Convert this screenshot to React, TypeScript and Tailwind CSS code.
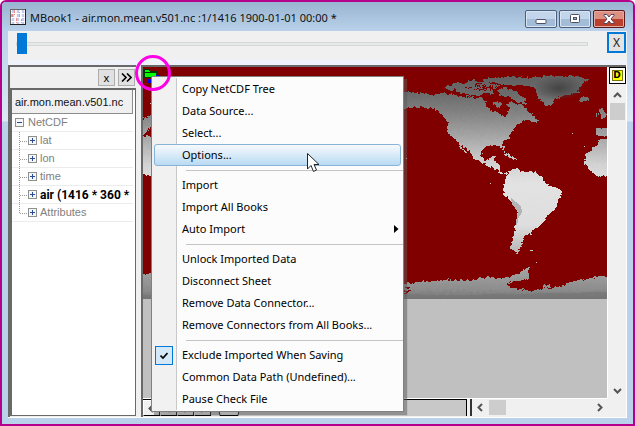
import React, { useState } from "react";
import clsx from "clsx";

type MenuEntry = {
  label?: string;
  separator?: boolean;
  submenu?: boolean;
  checkable?: boolean;
};

const menuEntries: MenuEntry[] = [
  { label: "Copy NetCDF Tree" },
  { label: "Data Source..." },
  { label: "Select..." },
  { label: "Options..." },
  { separator: true },
  { label: "Import" },
  { label: "Import All Books" },
  { label: "Auto Import", submenu: true },
  { separator: true },
  { label: "Unlock Imported Data" },
  { label: "Disconnect Sheet" },
  { label: "Remove Data Connector..." },
  { label: "Remove Connectors from All Books..." },
  { separator: true },
  { label: "Exclude Imported When Saving", checkable: true },
  { label: "Common Data Path (Undefined)..." },
  { label: "Pause Check File" },
];

const treeItems = ["lat", "lon", "time", "air (1416 * 360 *", "Attributes"];

const BookIcon = () => (
  <svg width="16" height="16" viewBox="0 0 16 16" shapeRendering="crispEdges">
    <rect width="16" height="16" fill="#f8f0f4" />
    <path d="M2 1h2v14h-2zM7 1h2v14h-2zM12 1h2v14h-2z" fill="#a9b9ee" opacity=".7" />
    <path d="M4 1h2v5h-2zM9 3h2v5h-2zM5 8h2v6h-2zM10 10h2v4h-2zM1 5h2v3h-2z" fill="#f07070" opacity=".75" />
    <path d="M1 4.500h14M1 8.500h14M1 12.500h14M5.500 1v14M10.500 1v14" stroke="#fff" />
    <path d="M.5 0V16M0 .5H16" stroke="#666" />
    <path d="M0 15.500h16M15.500 0v16" stroke="#222" />
  </svg>
);

const Chevron = ({ dir }: { dir: "up" | "down" | "left" | "right" }) => {
  const paths = {
    up: "M1 6L4.500 2.500L8 6",
    down: "M1 3L4.500 6.500L8 3",
    left: "M6 1L2.500 4.500L6 8",
    right: "M3 1L6.500 4.500L3 8",
  };
  return (
    <svg width="9" height="9" viewBox="0 0 9 9" fill="none" stroke="#555" strokeWidth="2">
      <path d={paths[dir]} />
    </svg>
  );
};

const Expander = ({ open }: { open?: boolean }) => (
  <svg className="shrink-0" width="9" height="9" viewBox="0 0 9 9" shapeRendering="crispEdges">
    <rect x=".5" y=".5" width="8" height="8" fill="#f6f6f6" stroke="#8e8f8f" />
    <path d={open ? "M2 4.500h5" : "M2 4.500h5M4.500 2v5"} stroke="#2b4a9b" />
  </svg>
);

const TitleBar = () => (
  <header className="flex h-[29px] shrink-0 items-center bg-linear-to-b from-[#99b4d1] to-[#b9d1ea] pr-2 pl-2">
    <BookIcon />
    <h1 className="min-w-0 flex-1 truncate pt-1 pl-1 font-['Noto_Sans','Open_Sans',sans-serif] text-[11px] text-[#111]">
      MBook1 - air.mon.mean.v501.nc :1/1416 1900-01-01 00:00 *
    </h1>
    <div className="flex gap-0.5 pt-[5px]">
      <button
        aria-label="Minimize"
        className="flex h-[18px] w-8 items-center justify-center rounded-xs border border-[#4d5f7d] bg-linear-to-b from-[#c2d5ea] from-50% to-[#a3bcd8] to-50% shadow-[inset_0_0_0_1px_#d8e5f2]"
      >
        <svg width="12" height="12" viewBox="0 0 12 12">
          <rect x="1" y="6.500" width="10" height="4" rx="1" fill="#fff" stroke="#4a5262" />
        </svg>
      </button>
      <button
        aria-label="Maximize"
        className="flex h-[18px] w-8 items-center justify-center rounded-xs border border-[#4d5f7d] bg-linear-to-b from-[#c2d5ea] from-50% to-[#a3bcd8] to-50% shadow-[inset_0_0_0_1px_#d8e5f2]"
      >
        <svg width="12" height="10" viewBox="0 0 12 10">
          <rect x="1.500" y=".5" width="9" height="8" rx="1" fill="#fff" stroke="#4a5262" />
          <rect x="4.500" y="3.500" width="3" height="2" fill="#9bb4d4" stroke="#4a5262" />
        </svg>
      </button>
      <button
        aria-label="Close"
        className="flex h-[18px] w-8 items-center justify-center rounded-xs border border-[#5c1a1a] bg-linear-to-b from-[#dd9082] from-50% to-[#b8402c] to-50% shadow-[inset_0_0_0_1px_#e5aaa0]"
      >
        <svg width="12" height="10" viewBox="0 0 12 10">
          <path d="M1 .5H4L6 3L8 .5H11V1.500L8 5L11 8.500V9.500H8L6 7L4 9.500H1V8.500L4 5L1 1.500Z" fill="#fff" stroke="#55435a" />
        </svg>
      </button>
    </div>
  </header>
);

const SliderBar = () => {
  const [frame, setFrame] = useState(1);
  return (
    <div className="flex h-[34px] shrink-0 items-start justify-between border-b-[5px] border-[#f0f2fb] bg-[#f0f0f0] pt-px pr-px pl-2">
      <input
        type="range"
        aria-label="Frame"
        min={1}
        max={1416}
        value={frame}
        onChange={(e) => setFrame(Number(e.target.value))}
        className="mt-px mr-[19px] h-[22px] min-w-0 flex-1 appearance-none bg-transparent [&::-webkit-slider-runnable-track]:h-1 [&::-webkit-slider-runnable-track]:border [&::-webkit-slider-runnable-track]:border-[#d6d6d6] [&::-webkit-slider-runnable-track]:bg-[#e7eaea] [&::-webkit-slider-thumb]:-mt-2.5 [&::-webkit-slider-thumb]:h-[21px] [&::-webkit-slider-thumb]:w-2.5 [&::-webkit-slider-thumb]:appearance-none [&::-webkit-slider-thumb]:bg-[#0078d7]"
      />
      <button className="h-[21px] w-[19px] border-2 border-[#0078d7] bg-[#e3e3e3] font-['Noto_Sans',sans-serif] text-[12px] leading-[17px] text-[#222]">
        X
      </button>
    </div>
  );
};

const TreePanel = () => (
  <aside className="flex w-[128px] shrink-0 flex-col border-t-2 border-l-2 border-[#696969] bg-[#f0f0f0]">
    <div className="flex h-[21px] shrink-0 items-center justify-end gap-[3px] pr-px">
      <button className="h-[17px] w-[17px] border border-[#adadad] bg-[#e1e1e1] font-['Noto_Sans',sans-serif] text-[11px] leading-[14px]">
        x
      </button>
      <button
        aria-label="Expand"
        className="flex h-[17px] w-[17px] items-center justify-center border border-[#adadad] bg-[#e1e1e1]"
      >
        <svg width="11" height="9" viewBox="0 0 11 9" fill="none" stroke="#000" strokeWidth="1.600">
          <path d="M1 .5L5 4.500L1 8.500M6 .5L10 4.500L6 8.500" />
        </svg>
      </button>
    </div>
    <div className="mb-px flex min-h-0 flex-1 flex-col border-2 border-r-[1px] border-b-[1px] border-[#696969] bg-white pr-0.5">
      <div className="h-6 shrink-0 border-r border-b border-[#8c8c8c] bg-[#f0f0f0] pl-[3px] font-['Liberation_Sans',sans-serif] text-[11px] leading-6 whitespace-nowrap text-[#111]">
        air.mon.mean.v501.nc
      </div>
      <ul className="font-['Liberation_Sans',sans-serif] text-[11px] text-[#808080]">
        <li className="flex h-[18px] items-center gap-1 border-b border-[#ececec] pl-[3px]">
          <Expander open />
          NetCDF
        </li>
        {treeItems.map((item, i) => (
          <li key={item} className="flex h-[18px] items-center border-b border-[#ececec] pl-[7px] whitespace-nowrap">
            <svg className="shrink-0" width="9" height="18" viewBox="0 0 9 18" stroke="#999" strokeDasharray="1 1" shapeRendering="crispEdges">
              <path d={i === treeItems.length - 1 ? "M.5 0V9" : "M.5 0V18"} />
              <path d="M1 9.500H9" />
            </svg>
            <Expander />
            <span
              className={clsx(
                "pl-[3px]",
                item.startsWith("air") && "font-['Roboto','Liberation_Sans',sans-serif] text-[12px] font-bold text-black"
              )}
            >
              {item}
            </span>
          </li>
        ))}
      </ul>
    </div>
  </aside>
);

// Grey scale of mean air temperature, land only
const WorldMap = () => (
  <svg className="block w-full" viewBox="143 67 464 232" shapeRendering="crispEdges">
    <defs>
      <linearGradient id="temp" gradientUnits="userSpaceOnUse" x1="0" y1="67" x2="0" y2="299">
        <stop offset="0" stopColor="#5c5c5c" />
        <stop offset=".12" stopColor="#6c6c6c" />
        <stop offset=".2" stopColor="#838383" />
        <stop offset=".32" stopColor="#adadad" />
        <stop offset=".42" stopColor="#d2d2d2" />
        <stop offset=".5" stopColor="#e2e2e2" />
        <stop offset=".68" stopColor="#dedede" />
        <stop offset=".8" stopColor="#b8b8b8" />
        <stop offset=".9" stopColor="#9c9c9c" />
        <stop offset=".96" stopColor="#8c8c8c" />
        <stop offset="1" stopColor="#747474" />
      </linearGradient>
      <radialGradient id="ice">
        <stop offset="0" stopColor="#444" />
        <stop offset="1" stopColor="#444" stopOpacity="0" />
      </radialGradient>
      <filter id="coast" filterUnits="userSpaceOnUse" x="143" y="67" width="464" height="232" colorInterpolationFilters="sRGB">
        <feTurbulence type="fractalNoise" baseFrequency=".3" numOctaves="2" seed="4" result="n" />
        <feDisplacementMap in="SourceGraphic" in2="n" scale="5" xChannelSelector="R" yChannelSelector="G" />
      </filter>
    </defs>
    <rect x="143" y="67" width="464" height="232" fill="#800000" />
    <g fill="url(#temp)" filter="url(#coast)">
      {/* eastern Asia */}
      <path d="M140 122L146 117L152 115V127L147 131L143 134V136H152V175H140Z" />
      {/* North America */}
      <path d="M395 91L410 92L420 93L432 95L443 93L452 94L460 96L472 96L480 98L487 101L485 105L490 110L497 112L502 115L505 118L508 113L510 108L507 104L511 101L516 105L521 104L526 108L529 113L534 116L532 120L524 120L519 124L515 127L511 133L508 139L502 143L504 148L505 153L502 149L499 145L492 145L486 146L482 150L481 156L484 160L489 160L492 156L496 156L495 162L500 165L500 171L504 173L508 172L507 175L501 174L495 169L486 165L480 161L473 159L471 153L465 148L458 142L450 135L447 128L448 121L443 117L438 111L431 108L420 107L411 107L404 110L395 111Z" />
      <path d="M458 143L461 145L464 150L467 153L465 153L461 149Z" />
      {/* Arctic islands */}
      <path d="M446 87L458 82L463 84L470 82L475 86L484 88L492 90L495 94L484 93L478 96L469 95L461 93L455 90L449 91Z" />
      <path d="M467 82L473 80L479 82L488 83L500 85L497 88L484 87L473 85Z" />
      <path d="M481 80L490 78L505 77L529 77L519 82L507 85L500 84L493 82L485 83Z" />
      <path d="M497 90L504 88L510 89L516 92L521 96L527 99L524 101L527 105L520 103L514 100L508 97L500 96Z" />
      <path d="M493 103L498 101L502 104L500 107L495 106Z" />
      <path d="M527 118L531 114L535 118L539 121L536 123L530 121Z" />
      {/* Greenland and Iceland */}
      <path d="M504 84L515 79L533 77L553 76L577 76L585 79L591 78L584 82L582 86L578 89L580 93L573 93L567 95L560 97L555 100L553 104L548 106L543 103L539 99L537 93L535 88L528 86L517 85Z" />
      <path d="M578 98L584 97L589 99L587 101L581 101Z" />
      {/* Caribbean */}
      <path d="M502 155L508 154L514 157L519 159L514 160L508 157Z" />
      {/* Europe and Africa */}
      <path d="M599 109L603 107L604 112L607 117L602 119L600 114ZM595 113L599 113L598 117L595 117ZM596 128L610 127V136L596 136Z" />
      <path d="M612 138L600 139L597 145L590 150L586 155L585 163L589 170L597 176L612 177Z" />
      {/* South America */}
      <path d="M508 173L513 169L517 168L521 171L529 171L537 173L542 177L544 181L550 186L558 188L562 192L558 201L556 209L547 216L544 221L539 227L533 230L532 233L525 236L523 241L521 246L518 253L514 252L511 249L511 243L514 236L515 227L517 217L517 208L512 202L506 197L503 190L505 180Z" />
      {/* Antarctica */}
      <path d="M140 275L175 272L240 279L310 276L370 280L404 284L412 283L423 281L450 280L476 280L480 277L507 278L515 275L521 272L526 271L529 275L529 279L517 281L507 283L508 286L520 289L533 291L547 288L560 287L570 282L587 279L600 276L610 277V305H140Z" />
      <path d="M530 267L524 269L519 273L524 274L529 270ZM543 286L551 285L551 287L543 288Z" />
    </g>
    {/* channels between the islands */}
    <path
      d="M449 93L466 97L484 98L497 101M466 87L480 90L494 88M476 84L488 86L503 87M482 97L488 94L498 98L508 101M400 287H411M402 291H413M400 294H407"
      fill="none"
      stroke="#800000"
      filter="url(#coast)"
    />
    <ellipse cx="559" cy="88" rx="25" ry="12" fill="url(#ice)" />
    <path d="M511 198L516 202L521 206L522 212L518 219L517 227L516 222L518 212L512 204Z" fill="#b4b4b4" />
    <path d="M142 295L300 293L460 295L607 292V299H142Z" fill="#757575" opacity=".6" />
    <path d="M406 158h1v1h-1zM572 133h1v1h-1zM584 146h1v1h-1zM490 183h1v1h-1zM150 103h1v1h-1zM530 250h3v1h-3zM536 262h1v1h-1z" fill="#ccc" />
  </svg>
);

const SheetTabs = () => (
  <div className="flex h-[17px] min-w-0 flex-1 items-start border-t border-r border-black bg-[#c8c8c8]">
    {(["left", "left", "right", "right"] as const).map((dir, i) => (
      <button
        key={i}
        aria-label={`Sheet ${dir}`}
        className="flex h-4 w-[17px] items-center justify-center border border-t-white border-r-black border-b-black border-l-white bg-[#f0f0f0]"
      >
        <Chevron dir={dir} />
      </button>
    ))}
    <svg className="ml-1.5" width="24" height="16" viewBox="0 0 24 16">
      <path d="M0 0L3 15.500H21L24 0Z" fill="#fff" stroke="#000" />
    </svg>
  </div>
);

const Sheet = () => (
  <main className="flex min-w-0 flex-1 flex-col border-t-2 border-l-2 border-[#696969] bg-[#f0f0f0]">
    <div className="flex min-h-0 flex-1">
      <div className="min-w-0 flex-1 border-r border-b border-white bg-[#c0c0c0]">
        <WorldMap />
      </div>
      <div className="flex w-[18px] shrink-0 flex-col items-center justify-between pb-0.5">
        <div className="flex flex-col items-center">
          <button className="flex h-[17px] w-[17px] items-center justify-center border border-black bg-white">
            <span className="flex h-[11px] w-[11px] items-center justify-center border border-[#777700] bg-[#ffff00] font-['DejaVu_Sans',sans-serif] text-[9px] leading-none font-bold">
              D
            </span>
          </button>
          <button aria-label="Scroll up" className="flex h-[19px] items-center pt-1">
            <Chevron dir="up" />
          </button>
          <div className="h-[17px] w-[15px] bg-[#cdcdcd]" />
        </div>
        <button aria-label="Scroll down" className="pb-0.5">
          <Chevron dir="down" />
        </button>
      </div>
    </div>
    <div className="mb-px flex h-[17px] shrink-0">
      <SheetTabs />
      <div className="ml-[3px] flex w-[156px] shrink-0 items-center border-l-2 border-[#333] pr-[22px]">
        <button aria-label="Scroll left" className="flex w-[17px] justify-center">
          <Chevron dir="left" />
        </button>
        <div className="h-[15px] w-[17px] bg-[#cdcdcd]" />
        <button aria-label="Scroll right" className="ml-auto">
          <Chevron dir="right" />
        </button>
      </div>
    </div>
  </main>
);

const ContextMenu = () => {
  const [exclude, setExclude] = useState(true);

  return (
    <div className="absolute top-[74px] left-[149px] w-[253px] border border-[#808080] bg-linear-to-r from-[#f1f1f1] from-[24px] to-[#fcfcfc] to-[24px] py-px font-['Noto_Sans','Open_Sans',sans-serif] text-[11px] text-black shadow-[3px_3px_1px_rgba(90,90,90,0.5)]">
      {menuEntries.map((entry, i) => {
        if (entry.separator) {
          return (
            <div key={i} className="ml-6 flex h-2 items-center border-l border-[#c8c8c8] pl-[9px]">
              <hr className="w-full border-[#c4c4c4]" />
            </div>
          );
        }
        if (entry.checkable) {
          return (
            <label key={i} className="flex h-[22px] items-center">
              <span className="flex w-6 justify-center">
                <input
                  type="checkbox"
                  checked={exclude}
                  onChange={() => setExclude(!exclude)}
                  className="h-[19px] w-[18px] appearance-none border border-[#0078d7] bg-[#d5e8f8]"
                />
                <svg className={clsx("pointer-events-none absolute mt-[6px]", !exclude && "hidden")} width="8" height="8" viewBox="0 0 8 8" fill="none" stroke="#000" strokeWidth="1.600">
                  <path d="M.5 3.500L3 6L7.500 1" />
                </svg>
              </span>
              <span className="flex h-full items-center border-l border-[#c8c8c8] pl-[5px]">{entry.label}</span>
            </label>
          );
        }
        const active = entry.label === "Options...";
        return (
          <button
            key={i}
            className={clsx(
              "flex h-[22px] w-full items-center text-left",
              active && "px-0.5"
            )}
          >
            {active ? (
              <span className="flex h-full flex-1 items-center rounded-[3px] border border-[#8ab4d6] bg-linear-to-b from-[#f7fafd] to-[#b9dbf3] pl-[27px]">
                {entry.label}
              </span>
            ) : (
              <span className="ml-6 flex h-full flex-1 items-center justify-between border-l border-[#c8c8c8] pr-1 pl-[5px]">
                {entry.label}
                {entry.submenu && (
                  <svg width="5" height="8" viewBox="0 0 5 8">
                    <path d="M0 0L4.500 4L0 8Z" />
                  </svg>
                )}
              </span>
            )}
          </button>
        );
      })}
    </div>
  );
};

const App = () => (
  <div className="relative flex min-h-screen flex-col overflow-hidden rounded-t-md border-2 border-[#b5008b] bg-[#b9d1ea]">
    <TitleBar />
    <div className="flex min-h-0 flex-1 flex-col bg-linear-to-b from-[#b9d1ea] via-[#dde8f5] via-[90px] to-[#b9d1ea] to-[91px] px-1.5 pb-1.5">
      <div className="flex min-h-0 flex-1 flex-col bg-[#f0f0f0]">
        <SliderBar />
        <div className="flex min-h-0 flex-1 gap-[5px] border-r border-b border-white">
          <TreePanel />
          <Sheet />
        </div>
      </div>
    </div>

    {/* connector icon in the sheet corner */}
    <svg className="absolute top-[65px] left-[141px]" width="18" height="20" viewBox="0 0 18 20" shapeRendering="crispEdges">
      <path d="M1 2H6L7 4H13V10H1Z" fill="#0f0" stroke="#003800" />
      <path d="M2 5.500H13" stroke="#003800" />
      <path d="M13 9H17M5 13H10M5 15H10" stroke="#0000f0" strokeWidth="1.500" />
    </svg>
    <ContextMenu />
    <div className="pointer-events-none absolute top-[53px] left-[133px] h-9 w-9 rounded-full border-[3px] border-[#ff00e6]" />
    <svg className="pointer-events-none absolute top-[151px] left-[305px]" width="13" height="20" viewBox="0 0 13 20">
      <path d="M.5 .5V16L4 12.500L6.500 18.500L9.500 17L7 11.500H12Z" fill="#fff" stroke="#222" />
    </svg>
  </div>
);

export default App;
